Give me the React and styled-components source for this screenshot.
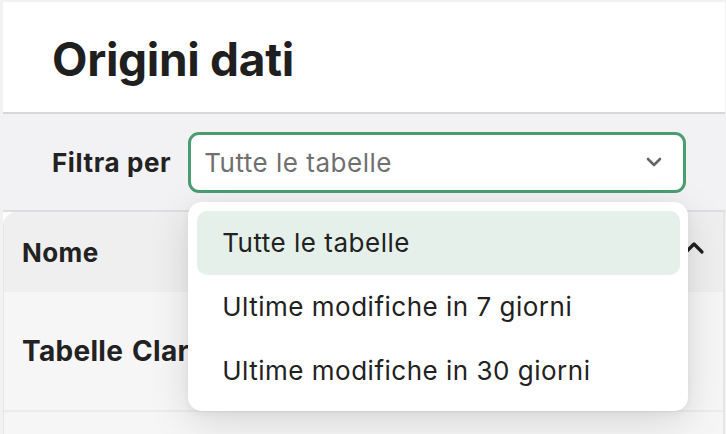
import React from "react";
import styled, { createGlobalStyle } from "styled-components";

const GlobalStyle = createGlobalStyle`
  html, body { margin: 0; padding: 0; }
  body {
    background: #f2f2f3;
    font-family: Inter, "Noto Sans", "Liberation Sans", sans-serif;
    color: #1f1f1f;
    overflow: hidden;
  }
`;

const Page = styled.div`
  margin: 2px 0 0 3px;
  width: 722px;
  background: #ffffff;
  min-height: 432px;
`;

const Header = styled.header`
  height: 112px;
  display: flex;
  align-items: center;
  padding: 4px 49px 0;
  border-bottom: 2px solid #d7d7da;
  box-sizing: border-box;
`;

const Title = styled.h1`
  margin: 0;
  font-size: 46px;
  font-weight: 700;
  letter-spacing: -0.3px;
  color: #1f1f1f;
`;

const FilterBar = styled.div`
  height: 98px;
  box-sizing: border-box;
  background: #f2f2f4;
  display: flex;
  align-items: center;
  gap: 17px;
  padding: 0 0 0 49px;
  border-bottom: 2px solid #dedee1;
`;

const Label = styled.span`
  font-size: 26px;
  font-weight: 700;
  letter-spacing: 0.6px;
  color: #222;
`;

const SelectWrap = styled.div`
  position: relative;
  width: 498px;
`;

const SelectBox = styled.div`
  height: 61px;
  box-sizing: border-box;
  border: 3px solid #4b9d70;
  border-radius: 11px;
  background: #fff;
  display: flex;
  align-items: center;
  justify-content: space-between;
  padding: 0 21px 0 13px;
  font-size: 26px;
  letter-spacing: 0.5px;
  color: #707070;
`;

const Dropdown = styled.ul`
  position: absolute;
  top: 70px;
  left: 0;
  width: 500px;
  box-sizing: border-box;
  margin: 0;
  padding: 9px 8px 8px 9px;
  list-style: none;
  background: #fff;
  border-radius: 14px;
  box-shadow: 0 10px 40px rgba(0, 0, 0, 0.13), 0 2px 8px rgba(0, 0, 0, 0.05);
  z-index: 10;
`;

const Option = styled.li`
  height: 64px;
  display: flex;
  align-items: center;
  padding-left: 25px;
  border-radius: 10px;
  font-size: 26px;
  letter-spacing: 0.5px;
  color: #222;
  background: ${(p) => (p.$active ? "#e6f0ea" : "transparent")};
`;

const Table = styled.div`
  border-left: 1px solid #e6e6e6;
  border-right: 2px solid #e6e6e6;
  border-top-left-radius: 14px;
  overflow: hidden;
`;

const HeadRow = styled.div`
  height: 80px;
  background: #efefef;
  display: flex;
  align-items: center;
  justify-content: space-between;
  padding: 0 18px 0 18px;
`;

const HeadCell = styled.span`
  font-size: 26px;
  font-weight: 700;
  letter-spacing: 0.4px;
  color: #222;
`;

const Row = styled.div`
  height: ${(p) => p.$h}px;
  background: #f6f6f6;
  display: flex;
  align-items: center;
  padding: 0 18px;
  border-bottom: 2px solid #ececec;
  box-sizing: border-box;
`;

const RowTitle = styled.span`
  font-size: 28px;
  font-weight: 700;
  letter-spacing: 0.3px;
  word-spacing: 2px;
  color: #222;
  white-space: nowrap;
`;

const ChevronDown = () => (
  <svg width="16" height="10" viewBox="0 0 16 10" fill="none">
    <path d="M2 2l6 6 6-6" stroke="#666" strokeWidth="2.6" strokeLinecap="round" strokeLinejoin="round" />
  </svg>
);

const ChevronUp = () => (
  <svg width="22" height="16" viewBox="0 0 22 16" fill="none" style={{ marginTop: "-8px" }}>
    <path d="M3 12l8-8 8 8" stroke="#1f1f1f" strokeWidth="3.2" strokeLinecap="round" strokeLinejoin="round" />
  </svg>
);

export default function App() {
  const options = ["Tutte le tabelle", "Ultime modifiche in 7 giorni", "Ultime modifiche in 30 giorni"];
  return (
    <>
      <GlobalStyle />
      <Page>
        <Header>
          <Title>Origini dati</Title>
        </Header>
        <FilterBar>
          <Label>Filtra per</Label>
          <SelectWrap>
            <SelectBox>
              <span>Tutte le tabelle</span>
              <ChevronDown />
            </SelectBox>
            <Dropdown>
              {options.map((o, i) => (
                <Option key={o} $active={i === 0}>
                  {o}
                </Option>
              ))}
            </Dropdown>
          </SelectWrap>
        </FilterBar>
        <Table>
          <HeadRow>
            <HeadCell>Nome</HeadCell>
            <ChevronUp />
          </HeadRow>
          <Row $h={120}>
            <RowTitle>Tabelle Clarissa</RowTitle>
          </Row>
          <Row $h={60} />
        </Table>
      </Page>
    </>
  );
}
